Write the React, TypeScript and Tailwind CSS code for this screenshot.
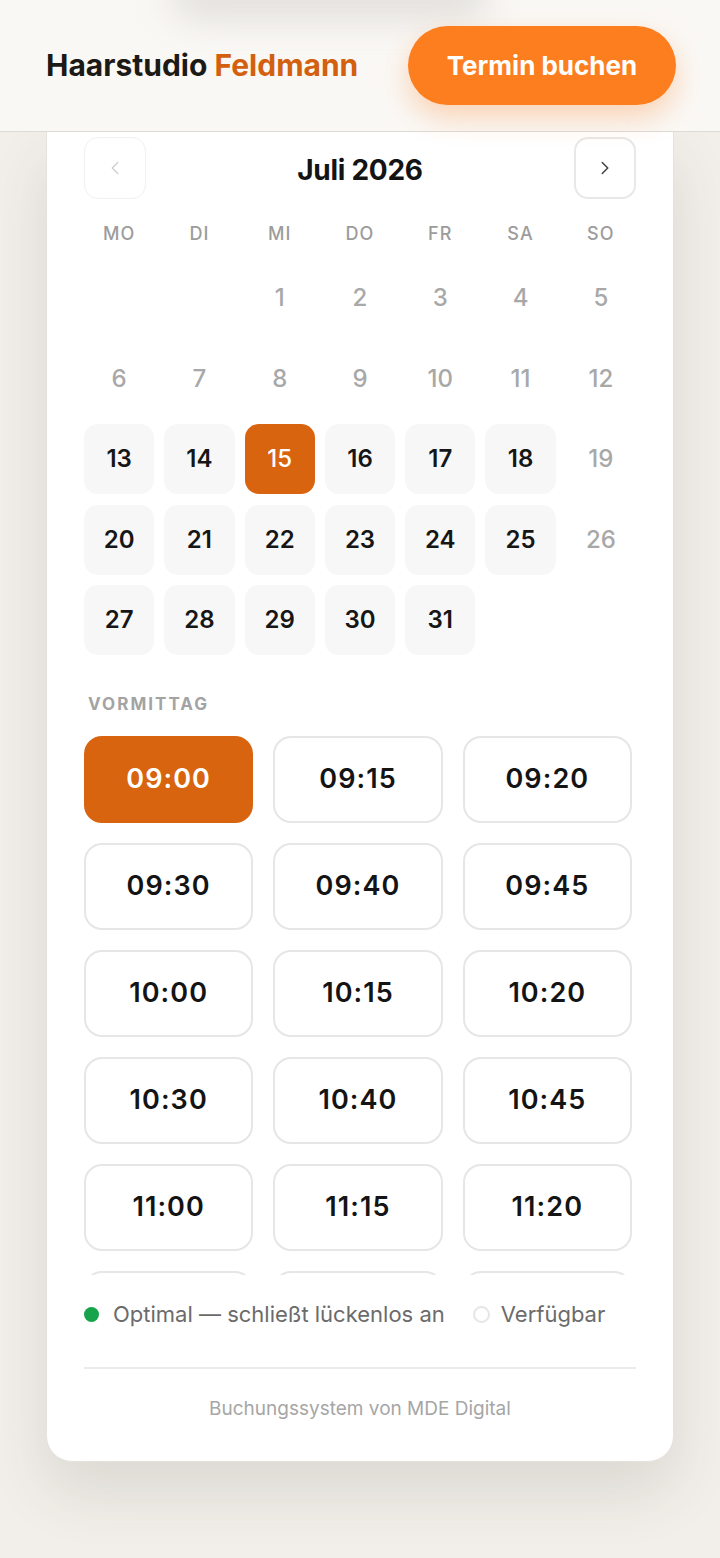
import { ChevronLeft, ChevronRight } from "lucide-react";

const WEEKDAYS = ["MO", "DI", "MI", "DO", "FR", "SA", "SO"];

// July 2026 starts on a Wednesday
const LEADING_BLANKS = 2;
const AVAILABLE = [13, 14, 15, 16, 17, 18, 20, 21, 22, 23, 24, 25, 27, 28, 29, 30, 31];
const SELECTED_DAY = 15;

const SLOTS = [
	"09:00", "09:15", "09:20",
	"09:30", "09:40", "09:45",
	"10:00", "10:15", "10:20",
	"10:30", "10:40", "10:45",
	"11:00", "11:15", "11:20",
];
const SELECTED_SLOT = "09:00";

const DayCell = ({ day }: { day: number }) => {
	const isSelected = day === SELECTED_DAY;
	const isAvailable = AVAILABLE.includes(day);

	if (isSelected) {
		return (
			<div className="h-[70px] rounded-[14px] bg-[#d9640f] flex items-center justify-center text-[24px] font-medium text-white">
				{day}
			</div>
		);
	}
	if (isAvailable) {
		return (
			<div className="h-[70px] rounded-[14px] bg-[#f7f7f7] flex items-center justify-center text-[24px] font-semibold text-[#161616]">
				{day}
			</div>
		);
	}
	return (
		<div className="h-[70px] flex items-center justify-center text-[24px] font-medium text-[#a8a8a8]">
			{day}
		</div>
	);
};

const App = () => {
	const cells: (number | null)[] = [
		...Array.from({ length: LEADING_BLANKS }, () => null),
		...Array.from({ length: 31 }, (_, i) => i + 1),
	];

	return (
		<div className="min-h-[1558px] bg-[#f2efea] font-['Inter','Noto_Sans',sans-serif] overflow-hidden">
			{/* ************************************************************
				Header
			************************************************************/}
			<header className="relative h-[132px] bg-[#faf8f5] border-b border-[#dedad4] flex items-center justify-between pl-[46px] pr-[44px]">
				<div className="absolute left-[170px] -top-[30px] w-[320px] h-[50px] rounded-full bg-[#d8d6d2] blur-[18px] opacity-70" />
				<div className="relative text-[30px] font-bold tracking-[0em] text-[#1c1a17]">
					Haarstudio <span className="text-[#d2600f]">Feldmann</span>
				</div>
				<button className="relative h-[79px] w-[268px] rounded-full bg-[#fd7e1f] text-white text-[26px] font-bold shadow-[0_12px_28px_rgba(253,126,31,0.3)]">
					Termin buchen
				</button>
			</header>

			{/* ************************************************************
				Booking card
			************************************************************/}
			<div className="mx-[46px] bg-white rounded-b-[26px] border-x border-b border-[#e6e3de] shadow-[0_30px_60px_rgba(60,50,40,0.12)] px-[37px] pt-[5px] pb-[37px]">
				{/* Month navigation */}
				<div className="flex items-center justify-between">
					<button className="w-[62px] h-[62px] rounded-[14px] border border-[#f0f0f0] flex items-center justify-center text-[#cfcfcf]">
						<ChevronLeft size={22} strokeWidth={1.5} />
					</button>
					<div className="text-[28px] font-bold text-[#141414] tracking-[-0.01em] pt-[4px]">Juli 2026</div>
					<button className="w-[62px] h-[62px] rounded-[14px] border-2 border-[#e8e8e8] flex items-center justify-center text-[#444]">
						<ChevronRight size={22} strokeWidth={1.7} />
					</button>
				</div>

				{/* Weekdays */}
				<div className="grid grid-cols-7 gap-x-[10px] mt-[21px]">
					{WEEKDAYS.map((d) => (
						<div key={d} className="text-center text-[18px] font-medium tracking-[0.06em] text-[#9c9c9c]">
							{d}
						</div>
					))}
				</div>

				{/* Days */}
				<div className="grid grid-cols-7 gap-x-[10px] gap-y-[10.5px] mt-[16px]">
					{cells.map((day, i) =>
						day === null ? <div key={`b${i}`} className="h-[70px]" /> : <DayCell key={day} day={day} />
					)}
				</div>

				{/* Time slots */}
				<div className="mt-[37px] pl-[4px] text-[17px] font-bold tracking-[0.12em] text-[#a3a3a3]">VORMITTAG</div>
				<div className="mt-[18px] h-[539px] overflow-hidden pr-[4px]">
					<div className="grid grid-cols-3 gap-[20px]">
						{SLOTS.map((s) =>
							s === SELECTED_SLOT ? (
								<div key={s} className="h-[87px] rounded-[18px] bg-[#d9640f] flex items-center justify-center text-[27px] font-semibold tracking-[0.04em] text-white">
									{s}
								</div>
							) : (
								<div key={s} className="h-[87px] rounded-[18px] border-2 border-[#e6e6e6] bg-white flex items-center justify-center text-[27px] font-semibold tracking-[0.04em] text-[#141414]">
									{s}
								</div>
							)
						)}
						{[0, 1, 2].map((i) => (
							<div key={`more${i}`} aria-hidden className="h-[87px] rounded-[18px] border-2 border-[#e6e6e6] bg-white" />
						))}
					</div>
				</div>

				{/* Legend */}
				<div className="mt-[25px] h-[30px] flex items-center text-[22px] text-[#6b6b6b]">
					<span className="w-[15px] h-[15px] rounded-full bg-[#16a34a]" />
					<span className="ml-[14px]">Optimal — schließt lückenlos an</span>
					<span className="ml-[28px] w-[17px] h-[17px] rounded-full border-2 border-[#e6e6e6]" />
					<span className="ml-[11px]">Verfügbar</span>
				</div>

				<div className="mt-[37px] border-t-2 border-[#ebebeb]" />
				<div className="mt-[27px] h-[28px] flex items-center justify-center text-[19px] text-[#a6a6a6]">Buchungssystem von MDE Digital</div>
			</div>
		</div>
	);
};

export default App;
